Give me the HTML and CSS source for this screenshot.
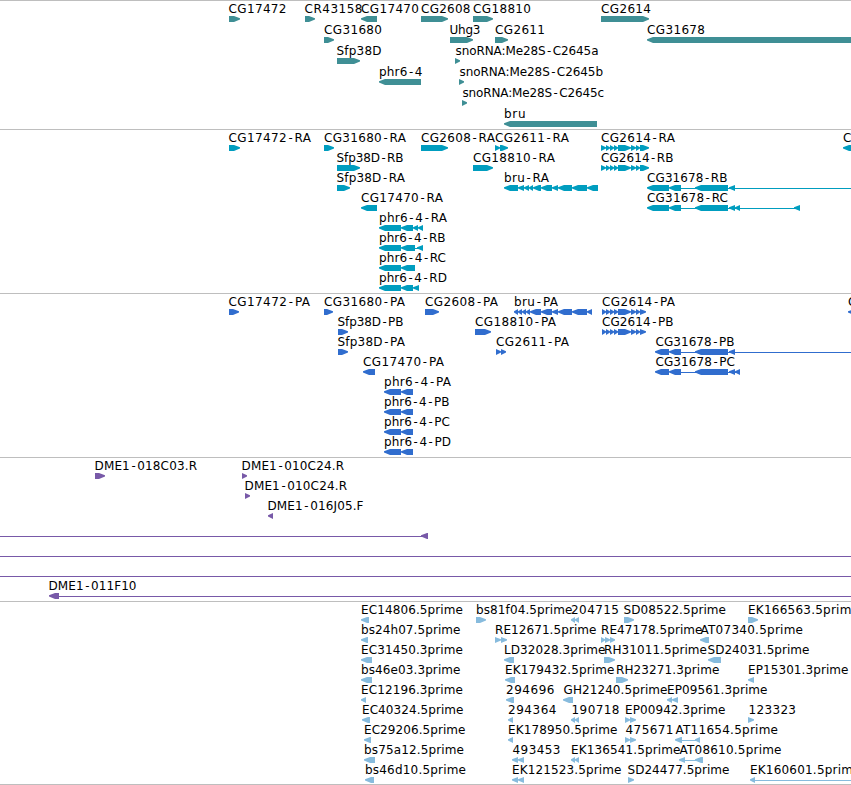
FILE: index.html
```html
<!DOCTYPE html>
<html lang="en">
<head>
<meta charset="utf-8">
<title>Genome tracks</title>
<link rel="stylesheet" href="styles.css">
</head>
<body>
<main class="browser">
  <section class="track genes"><svg id="genes"></svg></section>
  <section class="track transcripts"><svg id="transcripts"></svg></section>
  <section class="track proteins"><svg id="proteins"></svg></section>
  <section class="track bacs"><svg id="bacs"></svg></section>
  <section class="track ests"><svg id="ests"></svg></section>
</main>
<script src="tracks.js"></script>
</body>
</html>
```
FILE: styles.css
```css
body {
  margin: 0;
  background: #fff;
  overflow: hidden;
}

.browser {
  display: flex;
  flex-direction: column;
  width: 851px;
  height: 784px;
  border-bottom: 1px solid #bebebe;
}

.track {
  box-sizing: border-box;
  flex: none;
  border-top: 1px solid #bebebe;
}

.track svg {
  display: block;
  width: 100%;
  height: 100%;
  overflow: hidden;
}

.genes { height: 129px; color: #3f8f95; }
.transcripts { height: 164px; color: #009dbf; }
.proteins { height: 164px; color: #306dce; }
.bacs { height: 144px; color: #7859a8; }
.ests { height: 183px; color: #87bbdd; }

.label {
  font: 12px "DejaVu Sans", sans-serif;
  fill: #000;
}

.dash { font-family: "DejaVu Sans Mono", monospace; }

.shape { fill: currentColor; }
```
FILE: tracks.js
```js
// Feature: [row, label, label start, label end, strand, segments, connector range]
const phr = "379-401 401-";
const cg2614R = "601-606 606-610 610-614 614-618 618-631 631-636 636-640 640-649";
const cg2614P = "602-606 606-610 610-614 614-618 618-631 631-636 636-640 640-646";
const tracks = {
  genes: { pitch: 21, features: [
    [0, "CG17472", 228, 286, ">", "229-240"],
    [0, "CR43158", 304, 362, ">", "305-315"],
    [0, "CG17470", 360.5, 418.5, "<", "361-377"],
    [0, "CG2608", 420.5, 470, ">", "421-448"],
    [0, "CG18810", 472.5, 530.5, ">", "473-493"],
    [0, "CG2614", 600.5, 650.5, ">", "601-649"],
    [1, "CG31680", 323.5, 381.5, ">", "324-334"],
    [1, "Uhg3", 449, 480, ">", "450-473"],
    [1, "CG2611", 494.5, 544.5, ">", "495-508"],
    [1, "CG31678", 646.5, 704.5, "<", "647-860"],
    [2, "Sfp38D", 336, 381, ">", "337-360"],
    [2, "snoRNA:Me28S-C2645a", 455, 598, ">", "455-460"],
    [3, "phr6-4", 378.5, 422, "<", "379-421"],
    [3, "snoRNA:Me28S-C2645b", 459, 602.5, ">", "459-464"],
    [4, "snoRNA:Me28S-C2645c", 462, 603.5, ">", "462-467"],
    [5, "bru", 503.5, 525, "<", "504-597"]
  ]},
  transcripts: { pitch: 20, features: [
    [0, "CG17472-RA", 228, 310.5, ">", "229-240"],
    [0, "CG31680-RA", 323.5, 405.5, ">", "324-334"],
    [0, "CG2608-RA", 420.5, 494.5, ">", "421-448"],
    [0, "CG2611-RA", 494.5, 568.5, ">", "495-500 500-508"],
    [0, "CG2614-RA", 600.5, 674.5, ">", cg2614R],
    [0, "C", 842.5, 850.5, "<", "843-860"],
    [1, "Sfp38D-RB", 336, 403, ">", "337-360"],
    [1, "CG18810-RA", 472.5, 554.5, ">", "473-493"],
    [1, "CG2614-RB", 600.5, 673, ">", cg2614R],
    [2, "Sfp38D-RA", 336, 404.5, ">", "337-350"],
    [2, "bru-RA", 503.5, 548.5, "<", "504-518 518-524 524-529 529-533 533-541 541-552 552-558 558-572 572-587 587-598"],
    [2, "CG31678-RB", 646.5, 727, "<", "647-669 669-681 695-728 729-735", "670-851"],
    [3, "CG17470-RA", 360.5, 442.5, "<", "361-377"],
    [3, "CG31678-RC", 646.5, 727.5, "<", "647-669 669-681 695-728 729-735 735-740 794-800", "670-798"],
    [4, "phr6-4-RA", 378.5, 446.5, "<", phr + "413 413-418 418-423"],
    [5, "phr6-4-RB", 378.5, 445, "<", phr + "415 417-423", "413-420"],
    [6, "phr6-4-RC", 378.5, 445.5, "<", phr + "415"],
    [7, "phr6-4-RD", 378.5, 446.5, "<", phr + "413 413-419"]
  ]},
  proteins: { pitch: 20, features: [
    [0, "CG17472-PA", 228, 309.5, ">", "229-239"],
    [0, "CG31680-PA", 323.5, 404.5, ">", "324-333"],
    [0, "CG2608-PA", 424.5, 497.5, ">", "425-439"],
    [0, "bru-PA", 513.5, 557.5, "<", "514-518 518-522 522-526 526-530 530-541 541-552 552-558 558-572 572-587 587-592"],
    [0, "CG2614-PA", 601.5, 674.5, ">", cg2614P],
    [0, "C", 847.5, 855.5, "<", "848-860"],
    [1, "Sfp38D-PB", 337, 403, ">", "338-348"],
    [1, "CG18810-PA", 474.5, 555.5, ">", "475-491"],
    [1, "CG2614-PB", 601.5, 673, ">", cg2614P],
    [2, "Sfp38D-PA", 337, 404.5, ">", "338-348"],
    [2, "CG2611-PA", 495.5, 568.5, ">", "496-501 501-506"],
    [2, "CG31678-PB", 655, 734, "<", "655-669 669-681 695-728 729-735", "670-851"],
    [3, "CG17470-PA", 362.5, 443.5, "<", "363-375"],
    [3, "CG31678-PC", 655, 734.5, "<", "655-669 669-681 695-728 729-735 735-740", "670-738"],
    [4, "phr6-4-PA", 383.5, 450.5, "<", "384-401 401-413"],
    [5, "phr6-4-PB", 383.5, 449, "<", "384-401 401-413"],
    [6, "phr6-4-PC", 383.5, 449.5, "<", "384-401 401-413"],
    [7, "phr6-4-PD", 383.5, 450.5, "<", "384-401 401-413"]
  ]},
  bacs: { pitch: 20, features: [
    [0, "DME1-018C03.R", 94, 196.5, ">", "95-105"],
    [0, "DME1-010C24.R", 241, 343.5, ">", "242-247"],
    [1, "DME1-010C24.R", 244, 346.5, ">", "245-250"],
    [2, "DME1-016J05.F", 267, 363, "<", "268-273"],
    [3, "", 0, 0, "<", "421-428", "0-425"],
    [4, "", 0, 0, "<", "", "0-851"],
    [5, "", 0, 0, "<", "", "0-851"],
    [6, "DME1-011F10", 48, 136, "<", "49-59", "55-851"]
  ]},
  ests: { pitch: 20, features: [
    [0, "EC14806.5prime", 360.5, 462.5, "<", "361-369"],
    [0, "bs81f04.5prime", 475.5, 572, ">", "476-486"],
    [0, "204715", 570.5, 618.5, "<", "571-575 575-579"],
    [0, "SD08522.5prime", 623, 725.5, ">", "624-634"],
    [0, "EK166563.5prime", 747.5, 858.5, ">", "748-758"],
    [1, "bs24h07.5prime", 360.5, 460, "<", "361-368"],
    [1, "RE12671.5prime", 494.5, 596, ">", "495-501 501-507"],
    [1, "RE47178.5prime", 600.5, 702, ">", "601-605 605-610 610-615"],
    [1, "AT07340.5prime", 700, 802.5, "<", "700-709"],
    [2, "EC31450.3prime", 360.5, 462.5, "<", "361-372"],
    [2, "LD32028.3prime", 503.5, 605, "<", "504-514"],
    [2, "RH31011.5prime", 603.5, 706.5, ">", "604-615"],
    [2, "SD24031.5prime", 707, 809, "<", "708-721"],
    [3, "bs46e03.3prime", 360.5, 460, "<", "361-372"],
    [3, "EK179432.5prime", 504.5, 614, "<", "505-515"],
    [3, "RH23271.3prime", 615.5, 719, ">", "616-628"],
    [3, "EP15301.3prime", 747.5, 848, "<", "748-754"],
    [4, "EC12196.3prime", 360.5, 462.5, "<", "361-366"],
    [4, "294696", 505.5, 554, "<", "506-514"],
    [4, "GH21240.5prime", 563, 667, "<", "563-573"],
    [4, "EP09561.3prime", 666.5, 767, "<", "667-672 672-678"],
    [5, "EC40324.5prime", 361.5, 463, "<", "362-370"],
    [5, "294364", 507.5, 556, "<", "508-513"],
    [5, "190718", 571, 619, "<", "571-575 575-579"],
    [5, "EP00942.3prime", 624.5, 725, ">", "625-630 630-636"],
    [5, "123323", 748, 795.5, ">", "748-754"],
    [6, "EC29206.5prime", 363.5, 465, "<", "364-371"],
    [6, "EK178950.5prime", 507.5, 617, "<", "508-513"],
    [6, "475671", 625, 673, ">", "625-630 630-636"],
    [6, "AT11654.5prime", 675, 777.5, "<", "675-682 695-700", "680-698"],
    [7, "bs75a12.5prime", 363.5, 463.5, "<", "364-375"],
    [7, "493453", 512, 560, "<", "512-518 518-524"],
    [7, "EK136541.5prime", 570.5, 680, "<", "571-575 575-579"],
    [7, "AT08610.5prime", 679, 781, "<", "679-685 695-703", "683-700"],
    [8, "bs46d10.5prime", 364.5, 465.5, "<", "365-374"],
    [8, "EK121523.5prime", 511.5, 621, "<", "512-518 518-524"],
    [8, "SD24477.5prime", 627, 729, ">", "628-634"],
    [8, "EK160601.5prime", 749.5, 860, "<", "750-755", "753-851"]
  ]}
};

const SVG = "http://www.w3.org/2000/svg";

function add(parent, tag, attrs) {
  const el = document.createElementNS(SVG, tag);
  for (const key in attrs) el.setAttribute(key, attrs[key]);
  parent.appendChild(el);
  return el;
}

for (const id in tracks) {
  const svg = document.getElementById(id);
  const { pitch, features } = tracks[id];
  for (const [row, label, start, end, strand, segments, connector] of features) {
    const top = row * pitch + 15;
    if (connector) {
      const [a, b] = connector.split("-").map(Number);
      add(svg, "rect", { class: "shape", x: a, y: top + 3, width: b - a, height: 1 });
    }
    for (const segment of segments.split(" ").filter(Boolean)) {
      const [a, b] = segment.split("-").map(Number);
      const head = Math.min(6, b - a);
      const points = strand === ">"
        ? [[a, top], [b - head, top], [b, top + 2.3], [b, top + 3.5], [b - head, top + 6], [a, top + 6]]
        : [[b, top], [a + head, top], [a, top + 2.3], [a, top + 3.5], [a + head, top + 6], [b, top + 6]];
      add(svg, "polygon", { class: "shape", points: points.join(" ") });
    }
    if (!label) continue;
    const text = add(svg, "text", { class: "label", x: start + 0.5, y: top - 3, textLength: end - start });
    // Hyphens come from the monospaced face, which draws them wider.
    for (const part of label.split(/(-)/)) {
      add(text, "tspan", part === "-" ? { class: "dash" } : {}).textContent = part;
    }
  }
}
```
